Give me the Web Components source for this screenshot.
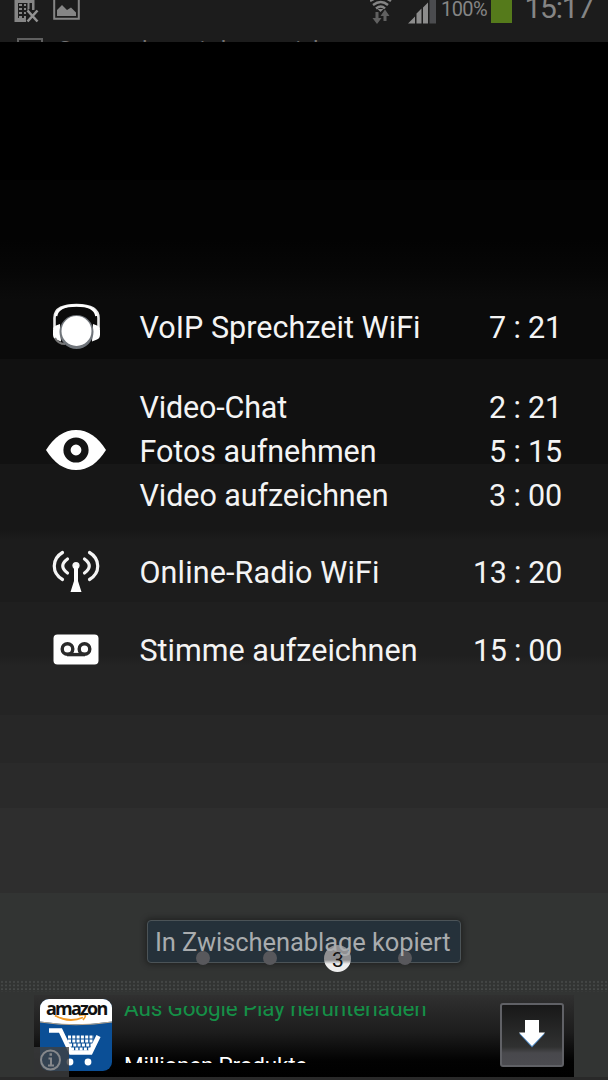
<!DOCTYPE html>
<html lang="de">
<head>
<meta charset="utf-8">
<title>Battery</title>
<style>
    html, body { margin: 0; height: 1080px; overflow: hidden; background: #000; }
    body { font-family: Roboto, "Liberation Sans", sans-serif; color: #f4f4f4; }
</style>
</head>
<body>
<phone-screen>
    <status-bar slot="status"></status-bar>
    <usage-list slot="main">
        <usage-group icon="headset">
            <usage-row time="7 : 21" width="281">VoIP Sprechzeit WiFi</usage-row>
        </usage-group>
        <usage-group icon="eye">
            <usage-row time="2 : 21" width="147.5">Video-Chat</usage-row>
            <usage-row time="5 : 15" width="237">Fotos aufnehmen</usage-row>
            <usage-row time="3 : 00" width="249">Video aufzeichnen</usage-row>
        </usage-group>
        <usage-group icon="radio">
            <usage-row time="13 : 20" width="240">Online-Radio WiFi</usage-row>
        </usage-group>
        <usage-group icon="tape">
            <usage-row time="15 : 00" width="278">Stimme aufzeichnen</usage-row>
        </usage-group>
    </usage-list>
    <toast-message slot="toast">In Zwischenablage kopiert</toast-message>
    <ad-banner slot="ad"></ad-banner>
</phone-screen>

<script>
/**
 * <fit-text width="120">
 * Spreads its letters so that the line takes the given width.
 */
class FitText extends HTMLElement {
    constructor() {
        super();
        this.attachShadow({ mode: 'open' });
        this.shadowRoot.innerHTML = `
            <style>
                :host { display: block; white-space: nowrap; }
                span { display: inline-block; }
            </style>
            <span><slot></slot></span>
        `;
    }

    connectedCallback() {
        const target = parseFloat(this.getAttribute('width'));
        const span = this.shadowRoot.querySelector('span');
        const count = this.textContent.length;
        if (!target || !count) return;
        span.style.letterSpacing = '0px';
        const natural = span.getBoundingClientRect().width;
        span.style.letterSpacing = `${(target - natural) / count}px`;
    }
}

/**
 * <app-icon name="eye">
 */
const ICONS = {
    headset: `<svg width="50" height="50" viewBox="0 0 50 50">
        <path d="M3.500 27V16C3.500 6 13 3 25.500 3s22 3 22 13v11" fill="none" stroke="#e8e8e8" stroke-width="2.600"/>
        <path d="M5 14C6 7 14 3.500 25.500 3.500s19 3.500 20 10.500" fill="none" stroke="#fff" stroke-width="2.600"/>
        <path d="M9 22l-4 1.500q-3 1-3 5v4q0 4 3 5l5 2zM42 22l4 1.500q3 1 3 5v4q0 4-3 5l-5 2z" fill="#fff"/>
        <path d="M4 36q3 6 10 6" fill="none" stroke="#777" stroke-width="2"/>
        <circle cx="25.500" cy="30" r="17" fill="#70757b"/>
        <circle cx="25.500" cy="29" r="15" fill="#fff"/></svg>`,
    eye: `<svg width="60" height="42" viewBox="0 0 60 42">
        <path d="M0 21C8 8 18 1 30 1s22 7 30 20C52 34 42 41 30 41S8 34 0 21z" fill="#fff"/>
        <circle cx="30" cy="21" r="9" fill="#fff" stroke="#141414" stroke-width="7.200"/></svg>`,
    radio: `<svg width="48" height="44" viewBox="0 0 48 44" fill="none" stroke="#f4f4f4" stroke-width="3.200" stroke-linecap="round">
        <path d="M10.500 3.500C-.5 10-.5 24 10.500 30.500M37.500 3.500C48.500 10 48.500 24 37.500 30.500M15.500 10Q6 17 15.500 24M32.500 10Q42 17 32.500 24"/>
        <circle cx="24" cy="16.500" r="3.600" fill="#f4f4f4" stroke="none"/>
        <path d="M22 17h4v15l3.500 11h-11L22 32z" fill="#fff" stroke="none"/></svg>`,
    tape: `<svg width="46" height="31" viewBox="0 0 46 31">
        <rect x=".5" y=".5" width="45" height="30" rx="4" fill="#fff"/>
        <g fill="none" stroke="#2a2a2a" stroke-width="3.400">
        <circle cx="14.500" cy="15" r="5.300"/><circle cx="31.500" cy="15" r="5.300"/><path d="M14 20.600h18"/></g></svg>`
};

class AppIcon extends HTMLElement {
    constructor() {
        super();
        this.attachShadow({ mode: 'open' });
    }

    connectedCallback() {
        this.shadowRoot.innerHTML = `
            <style>
                :host { display: flex; align-items: center; justify-content: center; }
                svg { display: block; }
            </style>
            ${ICONS[this.getAttribute('name')] || ''}
        `;
    }
}

/**
 * <usage-row time="7 : 21">label</usage-row>
 */
class UsageRow extends HTMLElement {
    constructor() {
        super();
        this.attachShadow({ mode: 'open' });
    }

    connectedCallback() {
        const time = this.getAttribute('time');
        this.shadowRoot.innerHTML = `
            <style>
                :host { display: flex; justify-content: space-between; height: 44px; line-height: 44px; font-size: 30.5px; }
            </style>
            <fit-text width="${this.getAttribute('width')}">${this.textContent}</fit-text>
            <fit-text width="${time.length === 7 ? 89 : 73}">${time}</fit-text>
        `;
    }
}

/**
 * <usage-group icon="eye">
 * One icon beside one or more usage rows.
 */
class UsageGroup extends HTMLElement {
    constructor() {
        super();
        this.attachShadow({ mode: 'open' });
    }

    connectedCallback() {
        this.shadowRoot.innerHTML = `
            <style>
                :host { display: grid; grid-template-columns: 64px 1fr; column-gap: 32px; align-items: center; }
                app-icon { height: 44px; margin-top: -3px; }
            </style>
            <app-icon name="${this.getAttribute('icon')}"></app-icon>
            <div><slot></slot></div>
        `;
    }
}

class UsageList extends HTMLElement {
    constructor() {
        super();
        this.attachShadow({ mode: 'open' });
        this.shadowRoot.innerHTML = `
            <style>
                :host { display: flex; flex-direction: column; gap: 34.3px; padding: 264.300px 46px 0 43.5px; }
                ::slotted(usage-group:nth-child(2)) { margin: 1.2px 0 -1.2px; }
            </style>
            <slot></slot>
        `;
    }
}

/**
 * <status-bar>
 * Scrolling ticker: the icons leave at the top, the next line enters below.
 */
class StatusBar extends HTMLElement {
    constructor() {
        super();
        this.attachShadow({ mode: 'open' });
        this.shadowRoot.innerHTML = `
            <style>
                :host { display: block; height: 42px; overflow: hidden; background: #1c1c1c; color: #858585; }
                .bar { display: flex; height: 36px; align-items: flex-start; padding: 0 15px 0 14px; }
                svg { display: block; flex: none; }
                .pic { margin-left: 14px; }
                .wifi { margin-left: auto; }
                .signal { margin-left: 16px; }
                .percent { margin: -2px 0 0 5px; font-size: 20px; line-height: 23px; }
                .battery { width: 20.5px; height: 23px; margin-left: 4px; background: #557a1b; }
                .clock { margin: -10px 0 0 13px; font-size: 30px; line-height: 36px; }
                .ticker { display: flex; gap: 15px; padding-left: 17px; font-size: 24px; line-height: 28px; color: #747474; }
                .thumb { width: 26px; height: 20px; margin-top: 2px; border: 2px solid #606060; box-sizing: border-box; }
            </style>
            <div class="bar">
                <svg width="25" height="23" viewBox="0 0 25 23">
                    <path d="M.5 0h20v10H18V3H4v15h8v4H.5z" fill="#858585"/>
                    <path d="M5 5h3M5 9h3M5 13h3M5 17h3M10 5h2M10 9h2M10 13h2M10 17h2M14.500 3v8" stroke="#858585" stroke-width="2"/>
                    <path d="M13.500 10.500l10 11M23.500 10.500l-10 11" stroke="#1c1c1c" stroke-width="5"/>
                    <path d="M13.500 10.500l10 11M23.500 10.500l-10 11" stroke="#929292" stroke-width="2.600"/>
                </svg>
                <svg class="pic" width="27" height="20" viewBox="0 0 27 20">
                    <path d="M1.200-5v23.800h24.600V-5" fill="none" stroke="#858585" stroke-width="2"/>
                    <path d="M4 16v-6l5-5 5 5 4-2.500 5 5V16z" fill="#858585"/>
                </svg>
                <svg class="wifi" width="22" height="24" viewBox="0 0 22 24">
                    <path d="M0 1Q11-6 21 1M3 5Q11-1 18 5M6 8.500Q11 4.500 15 8.500" fill="none" stroke="#858585" stroke-width="2.400"/>
                    <path d="M7.500 9h6l-3 3z" fill="#858585"/>
                    <path d="M5.500 12h3v6h3L7 24l-4.500-6h3zM13.500 21h3v-5h3L15 9.500 10.500 16h3z" fill="#606060"/>
                </svg>
                <svg class="signal" width="28" height="24" viewBox="0 0 28 24">
                    <path d="M0 23.500l7-7v7zM8.500 23.500V13.500l5-5v15zM15 23.500V7.500l5-5v21z" fill="#8c8c8c"/>
                    <path d="M21.500 0H28v23.500h-6.500z" fill="#4b4c4f"/>
                </svg>
                <fit-text class="percent" width="46">100%</fit-text>
                <div class="battery"></div>
                <fit-text class="clock" width="68.500">15:17</fit-text>
            </div>
            <div class="ticker">
                <div class="thumb"></div>
                <fit-text width="318">Screenshot wird gespeichert …</fit-text>
            </div>
        `;
    }
}

/**
 * <page-dots>
 * Pager with the current page as a numbered disc.
 */
class PageDots extends HTMLElement {
    constructor() {
        super();
        this.attachShadow({ mode: 'open' });
        this.shadowRoot.innerHTML = `
            <style>
                :host { display: grid; grid-template-columns: repeat(4, 67.6px); justify-content: center; align-items: center; justify-items: center; height: 28px; }
                i { width: 14px; height: 14px; border-radius: 50%; background: #58585c; }
                b { width: 27px; height: 27px; border-radius: 50%; background: linear-gradient(#909092 0 15px, #eee 19px); color: #111; font-size: 21px; line-height: 30px; font-weight: 400; text-align: center; }
            </style>
            <i></i><i></i><b>3</b><i></i>
        `;
    }
}

/**
 * <toast-message>
 * The text has its own layer, above the pager that shows through the box.
 */
class ToastMessage extends HTMLElement {
    constructor() {
        super();
        this.attachShadow({ mode: 'open' });
        this.shadowRoot.innerHTML = `
            <style>
                :host { display: block; box-sizing: border-box; width: 314px; height: 43px; padding-left: 7px;
                    border: 1.5px solid #4b5357; border-radius: 4px; background: #25313a; box-shadow: 0 0 5px 2px rgba(20, 20, 20, .5);
                    color: #a9acae; font-size: 25.5px; line-height: 43px; }
                fit-text { position: relative; z-index: 2; }
            </style>
            <fit-text width="295.500">${this.textContent}</fit-text>
        `;
    }
}

class AdBanner extends HTMLElement {
    constructor() {
        super();
        this.attachShadow({ mode: 'open' });
        this.shadowRoot.innerHTML = `
            <style>
                :host { position: relative; display: flex; box-sizing: border-box; height: 82px; margin: 0 34px;
                    padding: 4px 10px 0 6px; background: linear-gradient(#303030, #1c1c1c 38px, #020202 66px, #000); }
                svg { display: block; }
                .logo { position: relative; width: 72px; height: 72px; }
                .logo svg { border-radius: 9px; }
                .brand { position: absolute; left: 6px; top: -4px; font: bold 18px/26px "Open Sans", sans-serif; color: #111; }
                .lines { flex: 1; display: flex; flex-direction: column; justify-content: space-between; height: 57px; margin: 7px 0 0 12px; }
                .line { overflow: hidden; }
                .title { height: 17px; color: #159047; font-size: 22.5px; line-height: 26px; }
                .title fit-text { margin-top: -11px; }
                .sub { height: 8px; color: #fff; font-size: 22.5px; line-height: 26px; }
                .sub fit-text { margin-top: -3.5px; }
                .button { box-sizing: border-box; width: 64px; height: 64px; margin-top: 3.5px; border: 2px solid #606166; border-radius: 3px;
                    background: linear-gradient(#181818, #303131 42px, #48484c 48px, #4b4b50); display: flex; align-items: center; justify-content: center; }
                .button svg { margin-top: -2px; }
                .info { position: absolute; left: 0; bottom: 0; width: 35px; height: 30px; background: rgba(62, 64, 65, .8); }
            </style>
            <div class="logo">
                <svg width="72" height="72" viewBox="0 0 72 72">
                    <path d="M0 0h72v72H0z" fill="#0b4f96"/>
                    <path d="M0 0h72v22.500Q36 28 0 22.500z" fill="#fff"/>
                    <path d="M0 23Q36 28.500 72 23" fill="none" stroke="#b9a58a" stroke-width="1"/>
                    <path d="M15 16.500q14 8 28 2" fill="none" stroke="#f19a26" stroke-width="1.900"/>
                    <path d="M39 16.500q6.500-1.500 6.500 0t-2.500 4.500" fill="none" stroke="#f19a26" stroke-width="1.600"/>
                    <path d="M9 31.500h11.500L31 53.500h19.500L58.500 37" fill="none" stroke="#fff" stroke-width="4.600"/>
                    <path d="M28 38h26M28 42h26M29 46h24M31 50h20" stroke="#fff" stroke-width="2.800" stroke-dasharray="3 1.300"/>
                    <circle cx="30" cy="63" r="3.400" fill="#fff"/><circle cx="48" cy="63" r="3.400" fill="#fff"/>
                </svg>
                <fit-text class="brand" width="60.500">amazon</fit-text>
            </div>
            <div class="lines">
                <div class="line title"><fit-text width="302.500">Aus Google Play herunterladen</fit-text></div>
                <div class="line sub"><fit-text width="183">Millionen Produkte</fit-text></div>
            </div>
            <div class="button">
                <svg width="28" height="28" viewBox="0 0 28 28">
                    <path d="M7 1h14v12.500h6L14 27.500 1 13.500h6z" fill="#4d88c4"/>
                    <path d="M7 0h14v12.500h6L14 26 1 12.500h6z" fill="#fff"/>
                </svg>
            </div>
            <div class="info">
                <svg width="35" height="30" viewBox="0 0 35 30" fill="none" stroke="#85888b">
                    <circle cx="16.500" cy="13" r="9.500" stroke-width="2"/>
                    <path d="M14.500 11.500h2.500v7M14 18.500h6" stroke-width="2"/><path d="M15.500 7.500h2.500" stroke-width="2.500"/>
                </svg>
            </div>
        `;
    }
}

/**
 * <phone-screen>
 * Status bar, list, pager and banner in a column; the toast lies over the pager.
 */
class PhoneScreen extends HTMLElement {
    constructor() {
        super();
        this.attachShadow({ mode: 'open' });
        this.shadowRoot.innerHTML = `
            <style>
                :host { display: flex; flex-direction: column; width: 608px; height: 1080px; overflow: hidden;
                    background: linear-gradient(#000 0 180px, #030303 180px 240px, #060606 270px, #0b0b0b 300px 359px,
                        #111 359px 464px, #171717 464px 530px, #1c1c1c 540px 602px, #1f1f1f 602px 655px, #242424 665px 715px,
                        #272727 715px 763px, #2a2a2a 763px 808px, #2e2e2e 808px 893px, #323433 893px 1077px, #292929 1077px); }
                .main { flex: 1; }
                .footer { position: relative; height: 89px; }
                .toast { position: absolute; left: 147px; top: 13.5px; }
                page-dots { position: relative; z-index: 1; padding-top: 38px; }
                .dots { height: 12px; background: radial-gradient(circle at 2px 2px, #484b4a .7px, transparent 1.1px) 0 0 / 4px 3.6px; margin-top: 8px; }
                .edge { height: 3px; }
            </style>
            <slot name="status"></slot>
            <div class="main"><slot name="main"></slot></div>
            <div class="footer">
                <div class="toast"><slot name="toast"></slot></div>
                <page-dots></page-dots>
                <div class="dots"></div>
            </div>
            <slot name="ad"></slot>
            <div class="edge"></div>
        `;
    }
}

customElements.define('fit-text', FitText);
customElements.define('app-icon', AppIcon);
customElements.define('usage-row', UsageRow);
customElements.define('usage-group', UsageGroup);
customElements.define('usage-list', UsageList);
customElements.define('status-bar', StatusBar);
customElements.define('page-dots', PageDots);
customElements.define('toast-message', ToastMessage);
customElements.define('ad-banner', AdBanner);
customElements.define('phone-screen', PhoneScreen);
</script>
</body>
</html>
